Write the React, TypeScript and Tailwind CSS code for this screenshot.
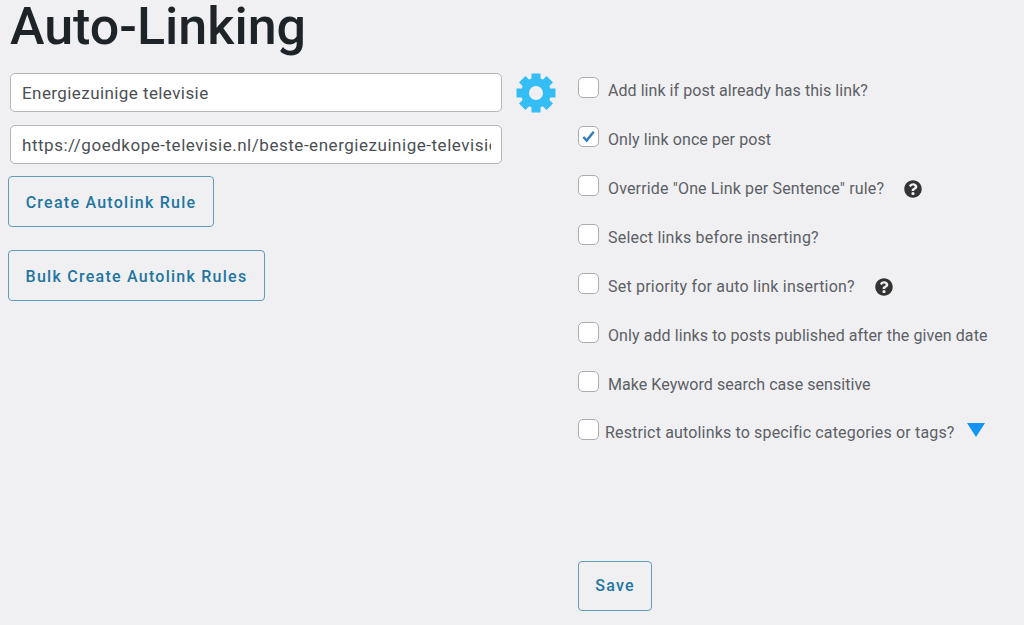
import React from 'react';
import { FaQuestionCircle } from 'react-icons/fa';

const options = [
  { label: 'Add link if post already has this link?', tracking: 'tracking-[0.05px]' },
  { label: 'Only link once per post', tracking: 'tracking-[0.08px]', checked: true },
  { label: 'Override "One Link per Sentence" rule?', tracking: 'tracking-[0.15px]', help: true },
  { label: 'Select links before inserting?', tracking: 'tracking-[0.21px]' },
  { label: 'Set priority for auto link insertion?', tracking: 'tracking-[0.21px]', help: true },
  { label: 'Only add links to posts published after the given date', tracking: 'tracking-[0.08px]' },
  { label: 'Make Keyword search case sensitive', tracking: 'tracking-[0.05px]' },
];

const toothAngles = [0, 45, 90, 135, 180, 225, 270, 315];

const Gear = () => (
  <svg viewBox="0 0 40 40" className="ml-[14px] h-[40px] w-[40px] shrink-0">
    {toothAngles.map((angle) => (
      <rect key={angle} x="15.5" y="0.5" width="9" height="10" fill="#35bdf5" transform={`rotate(${angle} 20 20)`} />
    ))}
    <circle cx="20" cy="20" r="11" fill="none" stroke="#35bdf5" strokeWidth="8" />
  </svg>
);

const Checkbox = ({ checked }: { checked?: boolean }) => (
  <span className="flex h-[21px] w-[21px] shrink-0 items-center justify-center rounded-[5px] border border-[#a9adb2] bg-white">
    {checked && (
      <svg viewBox="0 0 16 16" className="h-[15px] w-[15px]">
        <path d="M2.5 8.5l3.6 3.8L13.5 3" fill="none" stroke="#2f7fc0" strokeWidth="2.6" />
      </svg>
    )}
  </span>
);

const OutlineButton = ({ children, className }: { children: React.ReactNode; className: string }) => (
  <button className={`rounded-[4px] border border-[#5f9db5] text-[16px] font-medium tracking-[1.25px] text-[#1f76a0] ${className}`}>
    {children}
  </button>
);

export default function App() {
  return (
    <div className="flex h-[625px] w-[1024px] overflow-hidden bg-[#f0f0f3] font-['Roboto',sans-serif]">
      <div className="flex w-[578px] shrink-0 flex-col pl-2">
        <h1 className="ml-[2px] h-[73px] text-[52px] leading-[54px] font-medium text-[#1d2327]">Auto-Linking</h1>
        <div className="ml-[2px] flex items-start">
          <div className="flex h-[39px] w-[492px] items-center rounded-[5px] border border-[#b4b6ba] bg-white px-[11px] pt-[2px] text-[17px] tracking-[0.42px] text-[#4b4f54]">
            Energiezuinige televisie
          </div>
          <Gear />
        </div>
        <div className="ml-[2px] mt-[12px] flex h-[39px] w-[492px] items-center rounded-[5px] border border-[#b4b6ba] bg-white pl-[11px] pr-[10px] pt-[2px] text-[17px] tracking-[0.53px] text-[#4b4f54]">
          <span className="overflow-hidden whitespace-nowrap">https://goedkope-televisie.nl/beste-energiezuinige-televisie</span>
        </div>
        <OutlineButton className="mt-3 h-[51px] w-[206px] pt-[2px]">Create Autolink Rule</OutlineButton>
        <OutlineButton className="mt-[23px] h-[51px] w-[257px] pt-[2px]">Bulk Create Autolink Rules</OutlineButton>
      </div>

      <div className="flex flex-col pt-[77px]">
        {options.map((option) => (
          <div key={option.label} className={`mb-[28px] flex h-[21px] items-start text-[16px] leading-[21px] text-[#5c6065] ${option.tracking}`}>
            <Checkbox checked={option.checked} />
            <span className="ml-[9px] mt-[3px] whitespace-nowrap">{option.label}</span>
            {option.help && <FaQuestionCircle className="ml-[20px] mt-[5px] text-[18px] text-[#333333]" />}
          </div>
        ))}
        <div className="mt-[-1px] flex h-[21px] items-start text-[16px] leading-[21px] tracking-[0.16px] text-[#5c6065]">
          <Checkbox />
          <span className="ml-[6px] mt-[3px] whitespace-nowrap">Restrict autolinks to specific categories or tags?</span>
          <svg viewBox="0 0 18 14" className="ml-[12px] mt-[4px] h-[14px] w-[18px]">
            <path d="M0 0h18L9 14z" fill="#1295f2" />
          </svg>
        </div>
        <OutlineButton className="mt-[121px] h-[50px] w-[74px]">Save</OutlineButton>
      </div>
    </div>
  );
}
